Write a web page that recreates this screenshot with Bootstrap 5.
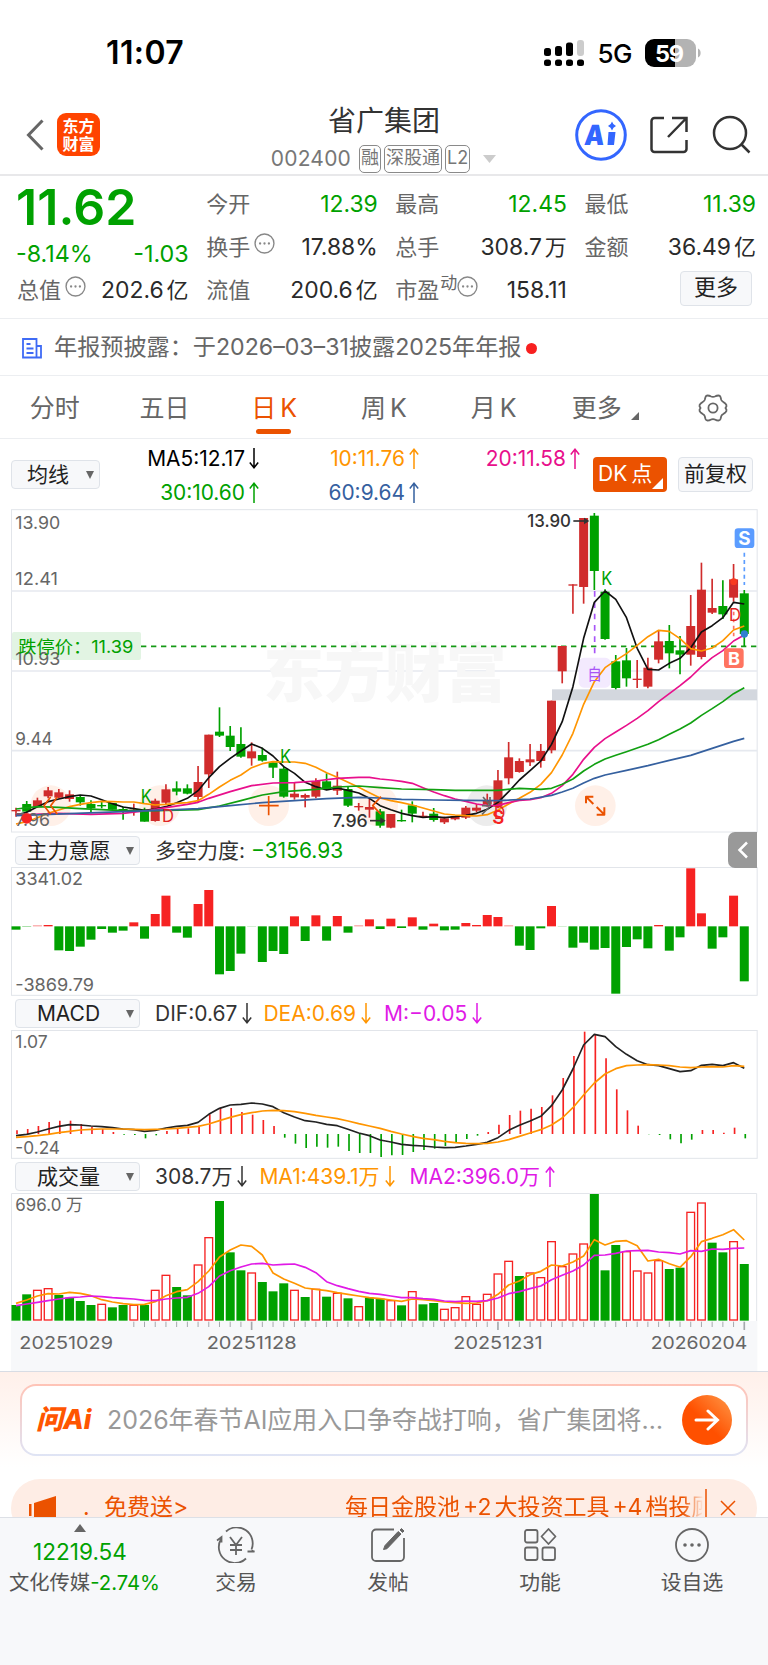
<!DOCTYPE html>
<html lang="zh-CN">
<head>
    <meta charset="UTF-8">
    <meta name="viewport" content="width=device-width, initial-scale=1.0">
    <title>省广集团 002400</title>
    <link href="https://cdn.jsdelivr.net/npm/bootstrap@5.3.0/dist/css/bootstrap.min.css" rel="stylesheet">
    <style>
        body {
            font-family: Inter, "Noto Sans CJK SC", sans-serif;
            color: #333;
            background: #fff;
            width: 768px;
            line-height: 1.2;
            overflow-x: hidden;
        }
        svg { display: block; flex: none; }
        svg text { font-family: Inter, "Noto Sans CJK SC", sans-serif; }
        .down { color: #00a100; }
        .orange { color: #ff9500; }
        .pink { color: #e8108c; }
        .blue { color: #35609f; }
        .violet { color: #e01ae6; }
        .dim { color: #666; }
        .line-b { border-bottom: 1px solid #eceef1; }

        .status-bar { height: 97px; padding: 9px 67px 0 106px; }
        .clock { font-size: 32px; font-weight: 600; letter-spacing: .4px; }
        .net { font-size: 26px; font-weight: 500; letter-spacing: -.5px; padding: 2px 13px 0 13px; }

        .app-bar { height: 79px; padding: 0 16px 2px 25px; border-bottom: 2px solid #e8e8ea; }
        .brand-logo { width: 43px; height: 43px; border-radius: 9px; background: #ff4400; color: #fff; font-size: 16px; font-weight: 700; line-height: 18px; margin-left: 12px; }
        .stock-name { font-size: 28px; line-height: 34px; }
        .stock-code { font-size: 21px; color: #777; letter-spacing: .2px; }
        .sub-line { margin-top: 7px; }
        .tag { border: 1.5px solid #8a8a8a; border-radius: 5px; height: 28px; line-height: 24px; font-size: 18px; padding: 0 1px; color: #777; margin-left: 3px; }

        .quote { height: 143px; padding: 7px 12px 0 17px; }
        .quote-grid { display: grid; grid-template-columns: repeat(4, 1fr); column-gap: 17.5px; font-size: 22px; }
        .quote-grid .cell { height: 43px; }
        .price { font-size: 50px; font-weight: 600; line-height: 50px; letter-spacing: .1px; margin: -1px 0 0 -1px; }
        .change { font-size: 23.3px; height: 36px; line-height: 36px; margin: 4px 0 -3px -1px; }
        .num { font-size: 22.9px; }
        .unit { font-size: 22px; margin-left: 3px; }
        .num-dark { color: #2a2a2a; }
        .ttm { font-size: 17px; margin: 0 0 14px 1px; }
        .more-btn { width: 72px; height: 35px; background: #f7f8fa; border: 1.5px solid #dfe3e9; border-radius: 4px; font-size: 22px; line-height: 31px; text-align: center; color: #222; margin-right: 4px; }

        .notice { height: 57px; font-size: 23.15px; padding: 2px 0 0 22px; }
        .red-dot { width: 11px; height: 11px; border-radius: 50%; background: #f82020; }

        .period-tabs { height: 63px; font-size: 25px; word-spacing: -3px; }
        .period-tabs .tab-item { width: 109.7px; height: 62px; position: relative; padding-top: 1px; }
        .tab-item.on { color: #eb5200; }
        .tab-item.on::after { content: ""; position: absolute; left: 37px; bottom: 4px; width: 35px; height: 5px; border-radius: 3px; background: #eb5200; }

        .ma-row { height: 66px; padding: 5px 15px 0 11px; }
        .picker { background: #f7f8fa; border: 1.5px solid #dfe3e9; border-radius: 4px; font-size: 21px; color: #222; height: 29px; line-height: 25px; }
        .picker::after { content: ""; border: 4.5px solid transparent; border-top: 8px solid #666; border-bottom: 0; }
        .ma-grid { display: grid; grid-template-columns: 149px 160px 161px; grid-auto-rows: 34px; font-size: 20.9px; padding-top: 2px; }
        .ma-grid > div { margin-right: -10px; }
        .dk-btn { width: 74px; height: 35px; border-radius: 4px; background: #eb5200; color: #fff; font-size: 21px; line-height: 34px; padding-left: 5px; position: relative; word-spacing: -2px; }
        .dk-btn::after { content: ""; position: absolute; right: 4px; bottom: 3px; border-left: 11px solid transparent; border-bottom: 11px solid #fff; }
        .fq-btn { width: 75px; height: 35px; background: #f7f8fa; border: 1.5px solid #dfe3e9; border-radius: 4px; font-size: 21px; line-height: 31px; text-align: center; color: #222; margin-left: 11px; }

        .ind-row { height: 34px; padding: 1px 0 0 15px; font-size: 21px; position: relative; }
        .ind-row .picker { width: 125px; padding-right: 5px; margin-right: 15px; }
        .ind-row .picker span { flex: 1; text-align: center; padding-right: 5px; }
        .drawer-tab { position: absolute; right: 11px; top: -1px; width: 29px; height: 36px; border-radius: 7px 0 0 7px; background: #999; }

        .ask { height: 146px; border-top: 1.5px solid #d8dce4; background: linear-gradient(#fff0ea, #fff 95px); padding: 12px 20px 0; overflow: hidden; }
        .ask-box { height: 72px; border: 2px solid transparent; border-radius: 16px; padding: 0 14px; background: linear-gradient(#fff, #fff) padding-box, linear-gradient(#ffc3b6, #dfe4f5) border-box; }
        .ask-logo { font-size: 27px; font-weight: 800; font-style: italic; width: 71px; color: #ff5500; }
        .ask-text { font-size: 24.95px; color: #999; width: 563px; padding-top: 2px; }
        .go { width: 50px; height: 50px; border-radius: 50%; background: linear-gradient(45deg, #ff5000 45%, #ff9a4a); }
        .promo { margin: 23px -9px 0; height: 58px; border-radius: 29px; background: #feede5; color: #eb5200; font-size: 23px; padding: 0 20px 0 18px; }
        .promo-text { width: 359px; word-spacing: -3.5px; -webkit-mask-image: linear-gradient(90deg, #000 94%, transparent); mask-image: linear-gradient(90deg, #000 94%, transparent); }

        .bottom-nav { height: 148px; background: #f7f8fa; border-top: 1.5px solid #dde0e6; color: #555; font-size: 20.8px; }
        .nav-cell { width: 152px; padding-top: 9px; }
        .nav-name { margin-top: 8px; }
        .index-cell { width: 160px; padding-top: 6px; }
        .index-value { font-size: 22.6px; line-height: 25px; margin-top: 7px; }
        .index-name { font-size: 20.3px; margin-top: 7px; padding-left: 9px; }
        .caret { border: 6px solid transparent; border-bottom: 8px solid #666; border-top: 0; }
    </style>
</head>
<body>
<!-- Shared icons -->
<svg width="0" height="0" class="position-absolute">
    <symbol id="arrowUp" viewBox="0 0 10 21"><path d="M5 21V1.5M.8 6.5 5 1.3l4.200 5.200" fill="none" stroke="currentColor" stroke-width="1.500"/></symbol>
    <symbol id="arrowDown" viewBox="0 0 10 21"><path d="M5 0v19.500M.8 14.500 5 19.700l4.200-5.200" fill="none" stroke="currentColor" stroke-width="1.500"/></symbol>
    <symbol id="info" viewBox="0 0 20 20"><circle cx="10" cy="10" r="9" fill="none" stroke="#888" stroke-width="1.300"/><circle cx="5.800" cy="10" r="1.100" fill="#888"/><circle cx="10" cy="10" r="1.100" fill="#888"/><circle cx="14.200" cy="10" r="1.100" fill="#888"/></symbol>
</svg>

<!-- Status bar -->
<div class="status-bar d-flex align-items-center justify-content-between text-black">
    <div class="clock">11:07</div>
    <div class="d-flex align-items-center">
        <svg width="40" height="26" viewBox="0 0 40 26">
            <rect x="33" y="0" width="7" height="16" rx="3" fill="#ccc"/>
            <rect x="0" y="8" width="7" height="8" rx="2.500"/><rect x="11" y="6" width="7" height="10" rx="2.500"/><rect x="22" y="2.500" width="7" height="13.500" rx="2.500"/>
            <rect x="0" y="19.500" width="7" height="6.500" rx="2.500"/><rect x="11" y="19.500" width="7" height="6.500" rx="2.500"/><rect x="22" y="19.500" width="7" height="6.500" rx="2.500"/><rect x="33" y="19.500" width="7" height="6.500" rx="2.500"/>
        </svg>
        <div class="net">5G</div>
        <svg width="56" height="28" viewBox="0 0 56 28">
            <path d="M9 0h21v28H9a9 9 0 0 1-9-9V9a9 9 0 0 1 9-9z" fill="#000"/>
            <path d="M30 0h12a9 9 0 0 1 9 9v10a9 9 0 0 1-9 9H30z" fill="#b3b3b3"/>
            <path d="M53 9.500c3.500 1.500 3.500 7.500 0 9z" fill="#b3b3b3"/>
            <text x="10" y="22.500" font-size="23.500" font-weight="700" fill="#fff" textLength="29">59</text>
        </svg>
    </div>
</div>

<!-- App bar -->
<div class="app-bar d-flex align-items-center position-relative">
    <svg width="20" height="32" viewBox="0 0 20 32"><path d="M17.500 1.500 3.500 16l14 14.500" fill="none" stroke="#666" stroke-width="3"/></svg>
    <div class="brand-logo text-center pt-1">东方<br>财富</div>
    <div class="position-absolute start-0 end-0 text-center pt-2">
        <div class="stock-name">省广集团</div>
        <div class="sub-line d-flex justify-content-center align-items-center">
            <span class="stock-code">002400</span>
            <span class="tag ms-2">融</span><span class="tag">深股通</span><span class="tag">L2</span>
            <svg style="margin-left: 11px" width="16" height="8" viewBox="0 0 16 8"><path d="M2 0h13L8.500 8z" fill="#ccc"/></svg>
        </div>
    </div>
    <div class="d-flex align-items-center ms-auto">
        <svg width="52" height="52" viewBox="0 0 52 52">
            <circle cx="26" cy="26" r="24.300" fill="none" stroke="#3366ff" stroke-width="3"/>
            <text x="10" y="36" font-size="28" font-weight="900" fill="#3366ff" textLength="20" lengthAdjust="spacingAndGlyphs" transform="skewX(-5) translate(2 0)">A</text>
            <path d="M33.500 23h7l-1.500 13h-6.500zM37 12.500q1 3.500 4 4.500-3 1-4 4.500-1-3.500-4-4.500 3-1 4-4.500z" fill="#3366ff"/>
        </svg>
        <svg style="margin-left: 23px" width="38" height="38" viewBox="0 0 38 38" fill="none" stroke="#333" stroke-width="2.500"><path d="M14 2H4.500A3 3 0 0 0 1.500 5v28a3 3 0 0 0 3 3h29a3 3 0 0 0 3-3V24M22 2h14.500v14M36 2.500 18 21"/></svg>
        <svg style="margin-left: 24px" width="40" height="40" viewBox="0 0 40 40" fill="none" stroke="#333" stroke-width="2.500"><circle cx="18" cy="18" r="16"/><path d="m29 29 8.500 8.500"/></svg>
    </div>
</div>

<!-- Quote -->
<div class="quote line-b">
    <div class="quote-grid">
        <div>
            <div class="price down">11.62</div>
            <div class="change down d-flex justify-content-between"><span>-8.14%</span><span>-1.03</span></div>
            <div class="cell d-flex align-items-center"><span class="dim">总值</span><svg class="ms-1 mb-2" width="21" height="21"><use href="#info"/></svg><span class="num num-dark ms-auto">202.6<span class="unit">亿</span></span></div>
        </div>
        <div>
            <div class="cell d-flex align-items-center justify-content-between"><span class="dim">今开</span><span class="num down">12.39</span></div>
            <div class="cell d-flex align-items-center"><span class="dim">换手</span><svg class="ms-1 mb-2" width="21" height="21"><use href="#info"/></svg><span class="num num-dark ms-auto">17.88%</span></div>
            <div class="cell d-flex align-items-center justify-content-between"><span class="dim">流值</span><span class="num num-dark">200.6<span class="unit">亿</span></span></div>
        </div>
        <div>
            <div class="cell d-flex align-items-center justify-content-between"><span class="dim">最高</span><span class="num down">12.45</span></div>
            <div class="cell d-flex align-items-center justify-content-between"><span class="dim">总手</span><span class="num num-dark">308.7<span class="unit">万</span></span></div>
            <div class="cell d-flex align-items-center"><span class="dim">市盈</span><span class="dim ttm">动</span><svg class="mb-2" width="21" height="21"><use href="#info"/></svg><span class="num num-dark ms-auto">158.11</span></div>
        </div>
        <div>
            <div class="cell d-flex align-items-center justify-content-between"><span class="dim">最低</span><span class="num down">11.39</span></div>
            <div class="cell d-flex align-items-center justify-content-between"><span class="dim">金额</span><span class="num num-dark">36.49<span class="unit">亿</span></span></div>
            <div class="cell d-flex align-items-center justify-content-end pb-1"><div class="more-btn">更多</div></div>
        </div>
    </div>
</div>

<!-- Notice -->
<div class="notice line-b d-flex align-items-center dim">
    <svg width="20" height="21" viewBox="0 0 20 21" fill="none" stroke="#3f6bf5" stroke-width="1.800"><path d="M14.500 19.500V1H1v18.500h18V8h-4.500M4.500 6h4M4.500 10.500h7M4.500 15h7"/></svg>
    <span style="margin-left: 12px">年报预披露：于2026–03–31披露2025年年报</span>
    <span class="red-dot ms-1"></span>
</div>

<!-- Period tabs -->
<div class="period-tabs line-b d-flex dim">
    <div class="tab-item d-flex align-items-center justify-content-center">分时</div>
    <div class="tab-item d-flex align-items-center justify-content-center">五日</div>
    <div class="tab-item on d-flex align-items-center justify-content-center">日 K</div>
    <div class="tab-item d-flex align-items-center justify-content-center">周 K</div>
    <div class="tab-item d-flex align-items-center justify-content-center">月 K</div>
    <div class="tab-item d-flex align-items-center justify-content-center ps-1">更多<svg class="mt-3" style="margin-left: 9px" width="8" height="8"><path d="M8 0v8H0z" fill="#666"/></svg></div>
    <div class="tab-item d-flex align-items-center justify-content-center">
        <svg width="30" height="28" viewBox="0 0 30 28" fill="none" stroke="#666" stroke-width="1.800"><path d="M9.500 1.500q2 0 3 .8 2.500 1.200 5 0 1-.8 3-.8 1.500 0 2 1.500l.8 3q.5 1.200 2 2l2 1.500q1.500 1.200 1.200 2.800l-1 1.700 1 1.700q.3 1.600-1.200 2.800l-2 1.500q-1.500.8-2 2l-.8 3q-.5 1.500-2 1.500-2 0-3-.8-2.500-1.200-5 0-1 .8-3 .8-1.500 0-2-1.500l-.8-3q-.5-1.200-2-2l-2-1.500Q1.200 17.300 1.500 15.700l1-1.700-1-1.700Q1.200 10.700 2.700 9.500l2-1.500q1.500-.8 2-2l.8-3q.5-1.500 2-1.500z"/><circle cx="15" cy="14" r="4.600"/></svg>
    </div>
</div>

<!-- Moving averages -->
<div class="ma-row d-flex align-items-center">
    <div class="picker d-flex align-items-center justify-content-between" style="width: 89px; padding: 0 5px 0 15px">均线</div>
    <div class="ma-grid">
        <div class="d-flex align-items-center justify-content-end text-black">MA5:12.17<svg class="ms-1" width="10" height="21"><use href="#arrowDown"/></svg></div>
        <div class="d-flex align-items-center justify-content-end orange">10:11.76<svg class="ms-1" width="10" height="21"><use href="#arrowUp"/></svg></div>
        <div class="d-flex align-items-center justify-content-end pink">20:11.58<svg class="ms-1" width="10" height="21"><use href="#arrowUp"/></svg></div>
        <div class="d-flex align-items-center justify-content-end down">30:10.60<svg class="ms-1" width="10" height="21"><use href="#arrowUp"/></svg></div>
        <div class="d-flex align-items-center justify-content-end blue">60:9.64<svg class="ms-1" width="10" height="21"><use href="#arrowUp"/></svg></div>
    </div>
    <div class="dk-btn ms-auto">DK 点</div>
    <div class="fq-btn">前复权</div>
</div>

<svg id="kChart" width="768" height="328" viewBox="0 0 2304 984"></svg>

<div class="ind-row d-flex align-items-center">
    <div class="picker d-flex align-items-center"><span>主力意愿</span></div>
    <span>多空力度: <span class="down">−3156.93</span></span>
    <div class="drawer-tab d-flex align-items-center justify-content-center"><svg width="12" height="18" viewBox="0 0 12 18"><path d="M10 1.500 2.500 9l7.500 7.500" fill="none" stroke="#fff" stroke-width="2.500"/></svg></div>
</div>
<svg id="powerChart" width="768" height="129" viewBox="0 111 2304 387"></svg>

<div class="ind-row d-flex align-items-center">
    <div class="picker d-flex align-items-center"><span>MACD</span></div>
    <span>DIF:0.67</span><svg class="ms-1" width="12" height="21"><use href="#arrowDown"/></svg>
    <span class="orange d-flex align-items-center" style="margin-left: 10px">DEA:0.69<svg class="ms-1" width="12" height="21"><use href="#arrowDown"/></svg></span>
    <span class="violet d-flex align-items-center" style="margin-left: 12px">M:−0.05<svg class="ms-1" width="12" height="21"><use href="#arrowDown"/></svg></span>
</div>
<svg id="macdChart" width="768" height="129" viewBox="0 105 2304 387"></svg>

<div class="ind-row d-flex align-items-center">
    <div class="picker d-flex align-items-center"><span>成交量</span></div>
    <span>308.7万</span><svg class="ms-1" width="12" height="21"><use href="#arrowDown"/></svg>
    <span class="orange d-flex align-items-center" style="margin-left: 11px">MA1:439.1万<svg class="ms-1" width="12" height="21"><use href="#arrowDown"/></svg></span>
    <span class="violet d-flex align-items-center" style="margin-left: 14px">MA2:396.0万<svg class="ms-1" width="12" height="21"><use href="#arrowUp"/></svg></span>
</div>
<svg id="volChart" width="768" height="178" viewBox="0 84 2304 534"></svg>

<!-- Ask AI and promo strip -->
<div class="ask">
    <div class="ask-box d-flex align-items-center">
        <div class="ask-logo text-nowrap">问Ai</div>
        <div class="ask-text text-nowrap">2026年春节AI应用入口争夺战打响，省广集团将…</div>
        <div class="go d-flex align-items-center justify-content-center ms-auto"><svg width="26" height="22" viewBox="0 0 26 22" fill="none" stroke="#fff" stroke-width="3" stroke-linecap="round"><path d="M2 11h21M14 2l9.500 9-9.500 9"/></svg></div>
    </div>
    <div class="promo d-flex align-items-center text-nowrap">
        <svg width="28" height="24" viewBox="0 0 28 24" fill="#eb5200"><path d="M0 8h2.500v12H0zM5 7 27 0v24h-11v4H8v-6l-3-1z"/></svg>
        <span style="width: 47px; padding-left: 26px">.</span>
        <span style="width: 241px">免费送&gt;</span>
        <span class="promo-text overflow-hidden">每日金股池 +2 大投资工具 +4 档投顾</span>
        <svg class="ms-auto" width="32" height="38" viewBox="0 0 32 38" stroke="#eb5200" stroke-width="1.500"><path d="M1 0v38M16 12l14 14M30 12 16 26"/></svg>
    </div>
</div>

<!-- Bottom navigation -->
<div class="bottom-nav d-flex">
    <div class="index-cell d-flex flex-column align-items-center">
        <div class="caret"></div>
        <div class="index-value down">12219.54</div>
        <div class="index-name text-nowrap">文化传媒<span class="down">-2.74%</span></div>
    </div>
    <div class="nav-cell d-flex flex-column align-items-center">
        <svg width="40" height="36" viewBox="0 0 40 36" fill="none" stroke="#666" stroke-width="1.800"><path d="M10 4.500a16 16 0 0 1 25.500 18M30 31.500A16 16 0 0 1 5 12M1 13.500l4.500-3.500v5.500M31.500 24.500h7l-3-1M14 10l6 8 6-8M20 18v10M14 18h12M14 23h12"/></svg>
        <div class="nav-name">交易</div>
    </div>
    <div class="nav-cell d-flex flex-column align-items-center">
        <svg width="34" height="36" viewBox="0 0 34 36" fill="none" stroke="#666" stroke-width="1.800"><path d="M23 2.500H5a4 4 0 0 0-4 4V30a4 4 0 0 0 4 4h24a4 4 0 0 0 4-4V11"/><path d="m12.500 22.500 3.500-.8L30 7l-2.800-2.500L14 18.500zM29 3l1.500-1.500L33 4l-1.500 1.500z" fill="#666" stroke-width="1"/></svg>
        <div class="nav-name">发帖</div>
    </div>
    <div class="nav-cell d-flex flex-column align-items-center">
        <svg width="34" height="36" viewBox="0 0 34 36" fill="none" stroke="#666" stroke-width="1.800"><rect x="2" y="3" width="12.500" height="12.500" rx="2"/><rect x="2" y="20.500" width="12.500" height="12.500" rx="2"/><rect x="19.500" y="20.500" width="12.500" height="12.500" rx="2"/><path d="m25.500 2 7 7.500-7 7.500-7-7.500z" stroke-linejoin="round"/></svg>
        <div class="nav-name">功能</div>
    </div>
    <div class="nav-cell d-flex flex-column align-items-center">
        <svg width="36" height="36" viewBox="0 0 36 36" fill="none" stroke="#666" stroke-width="1.800"><circle cx="18" cy="18" r="16"/><g fill="#666" stroke="none"><circle cx="11" cy="18" r="1.800"/><circle cx="18" cy="18" r="1.800"/><circle cx="25" cy="18" r="1.800"/></g></svg>
        <div class="nav-name">设自选</div>
    </div>
</div>

<script src="https://cdn.jsdelivr.net/npm/bootstrap@5.3.0/dist/js/bootstrap.bundle.min.js"></script>
<script>
    const RED = '#d02c2c', GREEN = '#00a100', HOT = '#f62222';
    const px = i => 48 + 32.13 * i;

    const rect = (x, y, w, h, fill, extra = '') => `<rect x="${x}" y="${y}" width="${w}" height="${h}" fill="${fill}" ${extra}/>`;
    const seg = (x1, y1, x2, y2, color, w = 4, extra = '') => `<path d="M${x1} ${y1}L${x2} ${y2}" stroke="${color}" stroke-width="${w}" ${extra}/>`;
    const path = (d, color, w = 5) => `<path d="${d}" fill="none" stroke="${color}" stroke-width="${w}" stroke-linejoin="round"/>`;
    const label = (x, y, str, len, fill = '#666', size = 52, extra = '') => `<text x="${x}" y="${y}" fill="${fill}" font-size="${size}" textLength="${len}" lengthAdjust="spacingAndGlyphs" ${extra}>${str}</text>`;
    const frame = (y, h) => `<rect x="34.500" y="${y}" width="2237" height="${h}" fill="none" stroke="#e2e5ea" stroke-width="3"/>`;

    // one value per trading day
    const series = (values, color, w) => path('M' + values.map((v, i) => px(i) + ' ' + v).join('L'), color, w);
    // [day, y] pairs for slow averages
    const sparse = (points, color, w) => path('M' + points.map(p => px(p[0]) + ' ' + p[1]).join('L'), color, w);

    // high, body top, body bottom, low, rise (1) or fall (0)
    const candles = [
        [908,915,919,935,1],[888,897,920,922,0],[878,886,907,907,1],[846,856,874,880,1],[852,862,878,880,1],[856,868,882,890,1],
        [872,876,892,902,0],[886,897,910,922,0],[888,900,904,910,0],[894,894,914,914,0],[905,912,916,944,0],[896,914,918,932,1],
        [908,915,950,950,0],[881,887,948,950,1],[838,853,893,900,1],[829,850,860,871,0],[838,850,866,868,0],[783,831,876,893,1],
        [689,689,808,849,1],[607,680,692,696,0],[663,692,726,738,0],[667,717,755,758,0],[712,739,760,782,1],[728,750,767,770,0],
        [772,772,788,819,0],[785,791,875,878,0],[833,866,877,884,1],[866,870,878,907,1],[820,828,875,880,1],[805,829,852,855,0],
        [800,842,857,870,1],[844,852,902,906,0],[894,903,907,917,1],[879,906,914,938,1],[912,919,962,968,0],[927,927,968,970,1],
        [914,945,949,950,0],[889,901,926,952,0],[920,932,936,938,1],[909,926,945,950,0],[935,940,952,957,1],[934,934,943,946,1],
        [903,908,938,942,1],[897,908,917,922,1],[866,885,898,905,1],[795,826,905,910,1],[711,757,820,838,1],[760,768,801,803,1],
        [717,763,772,783,1],[717,738,768,788,1],[587,587,736,745,1],[423,423,499,535,1],[238,238,242,326,1],[39,39,246,296,1],
        [24,32,198,255,0],[253,260,402,404,0],[450,469,549,553,0],[429,466,520,545,0],[465,521,525,549,1],[458,488,545,550,1],
        [377,409,464,475,1],[360,408,445,490,0],[393,436,449,508,0],[270,363,449,482,1],[173,254,456,463,1],[221,309,323,327,1],
        [226,303,328,342,0],[177,223,278,290,1],[255,265,387,423,0]
    ];
    const ma5 = [930,922,905,890,882,875,870,873,884,896,906,911,916,912,905,893,880,857,818,785,760,738,717,730,753,785,805,832,845,855,849,856,864,880,902,914,925,932,937,935,938,935,931,925,913,892,860,825,797,768,718,650,545,400,292,258,283,338,430,493,495,475,460,428,381,362,338,292,297];
    const ma10 = [957,950,938,925,915,905,898,893,889,890,891,891,896,900,898,895,893,887,868,846,826,810,788,776,770,771,771,775,787,803,817,832,847,863,879,887,893,900,909,918,927,930,932,933,929,915,897,880,862,838,803,750,685,598,530,488,466,446,421,395,376,379,401,431,438,429,407,375,363];
    const ma20 = [[0,930],[4,925],[7,928],[10,925],[12,918],[14,908],[16,898],[17,892],[18,880],[20,860],[22,842],[24,834],[26,833],[28,828],[30,820],[32,817],[33,817],[34,822],[35,825],[36,829],[37,835],[38,848],[39,861],[40,872],[41,882],[42,889],[43,897],[44,902],[45,901],[46,893],[47,886],[48,884],[49,878],[50,865],[51,842],[52,808],[53,763],[54,727],[55,701],[56,681],[57,661],[58,640],[59,617],[60,590],[61,566],[62,542],[63,516],[64,485],[65,458],[66,437],[67,408],[68,390]];
    const ma30 = [[0,912],[2,905],[4,907],[6,911],[10,917],[13,917],[17,914],[19,903],[21,887],[23,870],[25,860],[28,853],[30,846],[32,843],[34,848],[36,852],[39,854],[41,856],[45,856],[47,850],[49,853],[50,850],[51,838],[52,822],[53,798],[54,778],[55,762],[56,751],[57,740],[58,729],[59,718],[60,704],[61,688],[62,672],[63,654],[64,631],[65,611],[66,590],[67,566],[68,548]];
    const ma60 = [[0,932],[5,926],[10,920],[15,914],[17,911],[20,902],[23,893],[26,887],[29,881],[32,877],[34,879],[36,883],[39,885],[42,886],[45,887],[48,882],[50,871],[51,861],[52,850],[53,834],[54,820],[55,810],[57,796],[59,782],[61,766],[63,751],[65,730],[67,709],[68,700]];

    function drawK() {
        let s = frame(14, 967);
        [258, 498, 737].forEach(y => s += seg(34, y, 2271, y, '#e6e9ef', 5));
        s += label(790, 572, '东方财富', 730, '#f7f7f7', 188, 'font-weight="900"');
        s += rect(1656, 553, 615, 33, '#d3d7de');
        [152, 479, 806, 1133, 1786].forEach(x => s += `<circle cx="${x}" cy="902" r="61" fill="#fff0e8"/>`);
        s += '<circle cx="1460" cy="902" r="61" fill="#ececec"/>';
        s += rect(36, 381, 387, 84, '#e2f4e3', 'rx="6"');
        s += rect(1736, 458, 96, 90, '#f3eafe', 'rx="16"');
        s += label(46, 73, '13.90', 135) + label(46, 239, '12.41', 128) + label(46, 480, '10.93', 135) + label(46, 720, '9.44', 112);
        s += label(55, 444, '跌停价：11.39', 345, GREEN, 52);
        s += seg(423, 424, 2271, 424, '#159a15', 5, 'stroke-dasharray="16 14"');
        candles.forEach((c, i) => {
            const color = c[4] ? RED : GREEN;
            s += seg(px(i), c[0], px(i), c[3], color, 5) + rect(px(i) - 13.5, c[1], 27, c[2] - c[1], color);
        });
        s += seg(1784, 258, 1784, 458, '#a855f7', 5, 'stroke-dasharray="17 17"');
        s += seg(2201, 320, 2201, 400, '#ff7460', 5, 'stroke-dasharray="11 10"');
        s += series(ma5, '#111', 5) + series(ma10, '#ff9500', 5) + sparse(ma20, '#e8108c', 5) + sparse(ma30, '#11a011', 5) + sparse(ma60, '#35609f', 5);
        s += label(46, 962, '7.96', 104);
        // signals
        s += label(422, 895, 'K', 33, GREEN, 55) + label(840, 775, 'K', 33, GREEN, 55) + label(1804, 240, 'K', 33, GREEN, 55);
        s += label(486, 950, 'D', 36, '#e02424', 50) + label(2187, 349, 'D', 36, '#e02424', 50);
        s += label(1482, 942, 'D', 34, '#e02424', 50) + label(1477, 956, 'S', 36, HOT, 55, 'font-weight="600"');
        s += '<circle cx="80" cy="940" r="16" fill="#f62222"/><circle cx="2201" cy="230" r="10" fill="#f83a20"/><circle cx="2233" cy="387" r="11" fill="#2f7fd0"/>';
        s += label(1762, 524, '自', 44, '#a855f7', 48);
        s += rect(2204, 70, 59, 59, '#5b9cff', 'rx="10"') + label(2215, 120, 'S', 37, '#fff', 56, 'font-weight="700"');
        s += seg(2233, 143, 2233, 240, '#5b9cff', 5, 'stroke-dasharray="12 10"');
        s += rect(2172, 430, 59, 59, '#ff7460', 'rx="10"') + label(2184, 479, 'B', 36, '#fff', 54, 'font-weight="700"');
        // toolbar glyphs
        s += path('M152 876L132 902L152 928M172 876L152 902L172 928', '#eb5200', 5) + path('M777 902H836M806 873V931', '#eb5200', 5);
        s += path('M1143 875L1118 902L1143 928', '#eb5200', 5) + path('M1449 876L1470 900M1470 876V902H1446M1446 928L1468 906', '#666', 5);
        s += path('M1758 895V875H1780M1758 875L1780 897M1813 907V929H1790M1813 929L1790 906', '#eb5200', 6);
        // extremes
        s += label(1582, 67, '13.90', 131, '#333', 52, 'font-weight="500"') + seg(1720, 48, 1756, 48, '#333', 5) + '<path d="M1752 38L1768 48L1752 58z" fill="#333"/>';
        s += label(997, 965, '7.96', 106, '#333', 52, 'font-weight="500"') + seg(1110, 947, 1145, 947, '#333', 5) + '<path d="M1141 937L1157 947L1141 957z" fill="#333"/>';
        document.getElementById('kChart').innerHTML = s;
    }

    const power = [299,291,286,285,361,363,350,329,297,308,302,277,326,252,197,308,323,222,180,433,423,371,290,396,363,372,259,333,256,332,258,308,286,268,297,266,294,262,299,281,301,299,279,285,255,261,286,347,360,295,228,290,353,338,359,354,491,351,328,355,285,362,322,115,250,356,322,197,454];
    function drawPower() {
        let s = frame(112.5, 383.5);
        power.forEach((y, i) => {
            const size = Math.abs(y - 289);
            s += rect(px(i) - 13.5, Math.min(y, 289), 27, size, y < 289 ? HOT : GREEN, size < 4 ? 'opacity=".5"' : '');
        });
        s += label(46, 164, '3341.02', 203) + label(46, 482, '-3869.79', 236);
        document.getElementById('powerChart').innerHTML = s;
    }

    const hist = [406,402,393,381,377,377,387,396,402,411,419,420,430,421,408,401,400,396,358,339,339,351,359,375,393,428,446,459,455,458,455,468,474,474,486,481,480,471,465,461,453,442,432,422,411,389,360,347,341,336,301,249,183,110,120,190,283,346,392,418,420,433,445,434,405,405,413,398,430];
    const dif = [422,418,411,402,394,389,390,393,395,398,402,404,409,406,399,394,391,382,358,340,330,328,324,327,335,353,366,377,381,388,392,403,414,422,435,441,448,451,453,456,458,457,453,448,442,428,406,391,378,364,332,285,222,150,118,125,155,178,197,209,212,221,230,227,211,208,212,203,220];
    const dea = [427,425,422,418,413,409,405,403,402,402,402,403,404,403,402,400,397,394,387,377,367,359,353,348,346,347,350,355,361,366,371,378,386,393,400,409,417,424,430,434,439,443,445,446,445,441,434,424,414,404,390,369,338,300,264,237,221,212,210,209,210,212,216,218,216,215,216,212,214];
    function drawMacd() {
        let s = frame(106.5, 383.5);
        hist.forEach((y, i) => s += seg(px(i) + 3, 417, px(i) + 3, y, y < 417 ? HOT : GREEN, 5));
        s += series(dif, '#222', 5) + series(dea, '#ff9500', 5);
        s += label(46, 158, '1.07', 97) + label(46, 477, '-0.24', 134);
        document.getElementById('macdChart').innerHTML = s;
    }

    const vol = [420,388,376,371,390,398,408,420,418,427,420,421,420,376,331,366,391,300,218,108,262,316,324,351,379,355,376,396,373,395,385,400,425,398,401,407,421,380,418,414,433,428,395,418,388,327,289,333,324,338,230,305,267,237,87,316,240,260,318,324,287,312,308,142,114,233,262,230,297];
    const volUp = [2,3,8,11,13,14,17,18,22,26,28,30,32,35,37,40,41,42,43,44,45,46,48,49,50,51,52,53,57,58,59,60,63,64,67];
    const vma1 = [415,405,393,386,387,382,385,392,404,411,416,419,418,410,392,380,374,350,318,276,255,240,244,270,324,342,355,369,373,377,383,388,393,398,401,405,409,402,404,407,411,413,415,414,407,388,360,348,329,319,300,303,291,273,224,240,229,227,242,288,283,296,307,275,230,220,209,194,225];
    const vma2 = [422,417,412,407,402,398,396,393,395,398,400,402,406,407,402,399,397,385,365,333,317,306,297,295,300,298,297,307,323,350,362,371,379,385,388,393,398,398,401,403,408,410,408,409,407,399,386,380,371,363,344,331,318,300,271,270,265,258,257,256,261,263,267,257,259,252,253,250,249];
    function drawVol() {
        let s = rect(33, 468, 2239, 150, '#f7f8fa') + path('M34.5 468V85.5H2270V468', '#e2e5ea', 3);
        vol.forEach((y, i) => {
            if (volUp.includes(i)) {
                s += rect(px(i) - 11.5, y, 23, 465 - y, '#fff', `stroke="${HOT}" stroke-width="4"`);
            } else {
                s += rect(px(i) - 13.5, y, 27, 467 - y, GREEN);
            }
            if (i > 10) {
                const major = [22, 45, 68].includes(i);
                s += seg(px(i), 470, px(i), major ? 495 : 486, '#a5a8ac', major ? 5 : 3);
            }
        });
        s += series(vma1, '#ff9500', 5) + series(vma2, '#e01ae6', 5);
        s += label(46, 139, '696.0 万', 203);
        s += label(58, 553, '20251029', 281) + label(620, 553, '20251128', 270) + label(1360, 553, '20251231', 268) + label(1952, 553, '20260204', 290);
        document.getElementById('volChart').innerHTML = s;
    }

    drawK();
    drawPower();
    drawMacd();
    drawVol();
</script>
</body>
</html>
